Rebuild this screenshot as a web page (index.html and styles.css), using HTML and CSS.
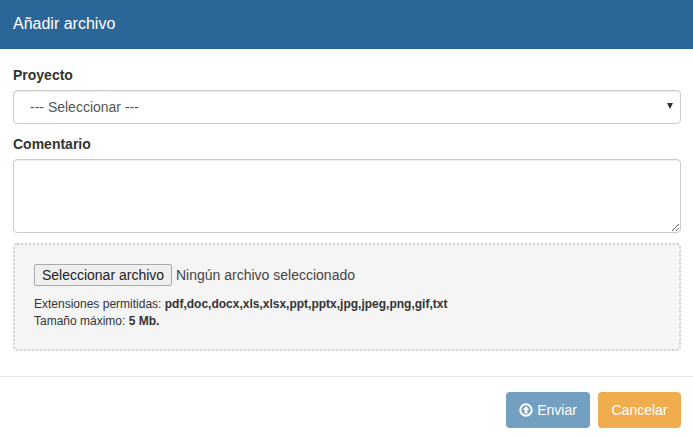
FILE: index.html
```html
<!DOCTYPE html>
<html lang="es">
<head>
    <meta charset="UTF-8">
    <meta name="viewport" content="width=device-width, initial-scale=1.0">
    <title>Añadir archivo</title>
    <link rel="stylesheet" href="styles.css">
</head>
<body>

<div class="modal">
    <div class="modal-header">
        <h4 class="modal-title">Añadir archivo</h4>
    </div>

    <div class="modal-body">
        <div class="form-group">
            <label class="form-label" for="proyecto">Proyecto</label>
            <div class="select-wrap">
                <select id="proyecto" class="form-control form-select">
                    <option>--- Seleccionar ---</option>
                </select>
            </div>
        </div>
        <div class="form-group">
            <label class="form-label" for="comentario">Comentario</label>
            <textarea id="comentario" class="form-control form-textarea"></textarea>
        </div>

        <!-- Zona de subida -->
        <div class="upload-box">
            <div class="file-row">
                <button type="button" class="file-btn">Seleccionar archivo</button>
                <span class="file-name">Ningún archivo seleccionado</span>
            </div>
            <p class="upload-help">Extensiones permitidas: <b>pdf,doc,docx,xls,xlsx,ppt,pptx,jpg,jpeg,png,gif,txt</b></p>
            <p class="upload-help">Tamaño máximo: <b>5 Mb.</b></p>
        </div>
    </div>

    <div class="modal-footer">
        <button type="button" class="btn btn-send">
            <svg class="btn-icon" viewBox="0 0 14 14" width="14" height="14">
                <circle cx="7" cy="7" r="5.7" fill="none" stroke="#fff" stroke-width="2"/>
                <path d="M7 3.2 L10.4 6.8 H8.4 V10.4 H5.6 V6.8 H3.6 Z" fill="#fff"/>
            </svg>
            Enviar
        </button>
        <button type="button" class="btn btn-cancel">Cancelar</button>
    </div>
</div>

</body>
</html>
```

FILE: styles.css
```css
* {
    box-sizing: border-box;
}
body {
    margin: 0;
    font-family: "Liberation Sans", Arial, sans-serif;
    font-size: 14px;
    color: #333333;
    background-color: #ffffff;
}
.modal-header {
    height: 49px;
    padding: 14px 13px;
    background-color: #2b6699;
}
.modal-title {
    margin: 0;
    font-size: 16px;
    font-weight: normal;
    line-height: 20px;
    color: #ffffff;
}
.modal-body {
    padding: 18px 12px 25px 13px;
}
.form-group {
    margin-bottom: 12px;
}
.form-group + .form-group {
    margin-bottom: 10px;
}
.form-label {
    display: block;
    margin-bottom: 7px;
    font-weight: bold;
    line-height: 16px;
}
.form-control {
    display: block;
    width: 100%;
    border: 1px solid #cccccc;
    border-radius: 4px;
    background-color: #ffffff;
    font-family: inherit;
    font-size: 14px;
    color: #555555;
    box-shadow: inset 0 1px 1px rgba(0, 0, 0, 0.075);
}
.select-wrap {
    position: relative;
}
.select-wrap::after {
    content: "";
    position: absolute;
    top: 13px;
    right: 8px;
    border-style: solid;
    border-width: 6px 3px 0 3px;
    border-color: #333333 transparent transparent transparent;
    pointer-events: none;
}
.form-select {
    height: 34px;
    padding: 6px 16px;
    appearance: none;
}
.form-textarea {
    height: 74px;
    padding: 6px 12px;
}
.upload-box {
    height: 108px;
    padding: 19px 19px;
    border: 2px dotted #d0d0d0;
    border-radius: 4px;
    background-color: #f5f5f5;
}
.file-row {
    display: flex;
    align-items: center;
    gap: 4px;
    margin-bottom: 10px;
}
.file-btn {
    width: 138px;
    height: 22px;
    padding: 0;
    border: 1px solid #a9a9a9;
    border-radius: 2px;
    background-color: #efefef;
    font-family: inherit;
    font-size: 14px;
    color: #222222;
}
.file-name {
    color: #444444;
}
.upload-help {
    margin: 0;
    font-size: 12px;
    line-height: 17px;
}
.modal-footer {
    display: flex;
    justify-content: flex-end;
    gap: 8px;
    padding: 15px 12px;
    border-top: 1px solid #e5e5e5;
}
.btn {
    display: flex;
    align-items: center;
    justify-content: center;
    gap: 4px;
    height: 36px;
    padding: 0;
    border: 1px solid transparent;
    border-radius: 4px;
    font-family: inherit;
    font-size: 14px;
    color: #ffffff;
}
.btn-send {
    width: 84px;
    background-color: #739fc1;
}
.btn-cancel {
    width: 83px;
    background-color: #f0ad4e;
}
```
